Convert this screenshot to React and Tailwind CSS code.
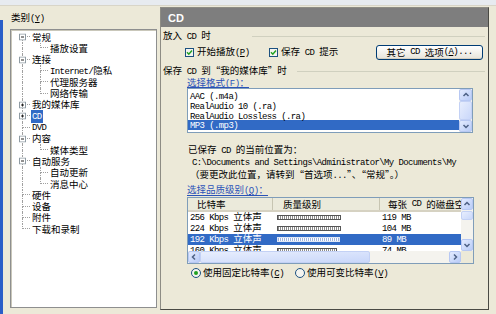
// App.jsx — WMP "选项" dialog, CD page
import React from 'react'

// Latin runs are half-width (SimSun-like), CJK runs use the CJK family
const MONO = "font-['Liberation_Mono',monospace] text-[9px] tracking-[-0.6px]"
const LINE = 'border-dotted border-[#a0a0a0]'

// splits a string into ASCII / CJK runs; "&X" underlines X (accelerator)
function Txt({ s }) {
  const out = []
  let k = 0
  s.split(/([\x20-\x7e]+)/).filter(Boolean).forEach(p => {
    if (/^[\x20-\x7e]+$/.test(p)) {
      const i = p.indexOf('&')
      if (i >= 0) {
        out.push(
          <span key={k++} className={MONO}>
            {p.slice(0, i)}<u>{p[i + 1]}</u>{p.slice(i + 2)}
          </span>
        )
      } else {
        out.push(<span key={k++} className={MONO}>{p}</span>)
      }
    } else {
      out.push(<span key={k++}>{p}</span>)
    }
  })
  return out
}

// ── Tree ─────────────────────────────────────────────────────────────
const TREE = [
  { t: '常规', g: ['first'], box: 'minus' },
  { t: '播放设置', g: ['bar', 'ell'] },
  { t: '连接', g: ['tee'], box: 'minus' },
  { t: 'Internet/隐私', g: ['bar', 'tee'] },
  { t: '代理服务器', g: ['bar', 'tee'] },
  { t: '网络传输', g: ['bar', 'ell'] },
  { t: '我的媒体库', g: ['tee'], box: 'plus' },
  { t: 'CD', g: ['tee'], box: 'plus', sel: true },
  { t: 'DVD', g: ['tee'] },
  { t: '内容', g: ['tee'], box: 'minus' },
  { t: '媒体类型', g: ['bar', 'ell'] },
  { t: '自动服务', g: ['tee'], box: 'minus' },
  { t: '自动更新', g: ['bar', 'tee'] },
  { t: '消息中心', g: ['bar', 'ell'] },
  { t: '硬件', g: ['tee'] },
  { t: '设备', g: ['tee'] },
  { t: '附件', g: ['tee'] },
  { t: '下载和录制', g: ['ell'] },
]

function Expander({ plus }) {
  return (
    <svg width="7" height="7" viewBox="0 0 7 7" className="absolute left-[7px] top-1/2 -translate-y-1/2">
      <rect x="0.5" y="0.5" width="6" height="6" fill="#fff" stroke="#8f9ba3" />
      <path d="M2 3.5H5" stroke="#222" />
      {plus && <path d="M3.5 2V5" stroke="#222" />}
    </svg>
  )
}

function Gutter({ type, box }) {
  const top = type === 'tee' || type === 'ell' || type === 'bar'
  const bottom = type === 'tee' || type === 'first' || type === 'bar'
  const arm = type !== 'bar'
  return (
    <div className="relative w-[18px] flex shrink-0">
      <div className="w-[10px]" />
      <div className="flex-1 flex flex-col">
        <div className={`h-1/2 ${LINE} ${top ? 'border-l' : ''} ${arm ? 'border-b' : ''}`} />
        <div className={`h-1/2 ${LINE} ${bottom ? 'border-l' : ''}`} />
      </div>
      {box && <Expander plus={box === 'plus'} />}
    </div>
  )
}

// ── Small XP controls ───────────────────────────────────────────────
function Check() {
  return (
    <svg width="9" height="9" viewBox="0 0 9 9" className="shrink-0">
      <rect x="0.5" y="0.5" width="8" height="8" fill="#f4f4f0" stroke="#1c5180" />
      <path d="M2 4.3L3.8 6.2L7 2.6" fill="none" stroke="#21a121" strokeWidth="1.5" />
    </svg>
  )
}

function Radio({ on }) {
  return (
    <svg width="10" height="10" viewBox="0 0 10 10" className="shrink-0">
      <circle cx="5" cy="5" r="4.5" fill="#f4f4f0" stroke="#1c5180" />
      {on && <circle cx="5" cy="5" r="2" fill="#21a121" />}
    </svg>
  )
}

const ARROW = {
  up: 'M1.5 5L4 2.5L6.5 5',
  down: 'M1.5 3L4 5.5L6.5 3',
  left: 'M5 1.5L2.5 4L5 6.5',
  right: 'M3 1.5L5.5 4L3 6.5',
}

function SBtn({ dir, className = '' }) {
  return (
    <div className={`flex items-center justify-center shrink-0 rounded-[2px] border border-[#b7c8f3] bg-linear-to-br from-[#e3ebfe] to-[#b9ccf7] ${className}`}>
      <svg width="8" height="8" viewBox="0 0 8 8">
        <path d={ARROW[dir]} fill="none" stroke="#4d6185" strokeWidth="1.5" />
      </svg>
    </div>
  )
}

const THUMB = 'rounded-[2px] border border-[#c3d1f5] bg-linear-to-br from-[#e8eefd] to-[#c9d7fa]'

// ── Data ───────────────────────────────────────────────────────────
const FORMATS = ['AAC (.m4a)', 'RealAudio 10 (.ra)', 'RealAudio Lossless (.ra)', 'MP3 (.mp3)']

const RATES = [
  { rate: '256 Kbps 立体声', bar: 64, size: '119 MB' },
  { rate: '224 Kbps 立体声', bar: 64, size: '104 MB' },
  { rate: '192 Kbps 立体声', bar: 63, size: '89 MB', sel: true },
  { rate: '160 Kbps 立体声', bar: 60, size: '74 MB' },
]

export default function App() {
  return (
    <div
      lang="zh-CN"
      className="w-[496px] h-[314px] overflow-hidden flex flex-col bg-[#ece9d8] text-black font-['Noto_Sans_CJK_SC','Noto_Sans',sans-serif] text-[9.5px] leading-[12px]"
    >
      {/* top strip */}
      <div className="h-[6px] shrink-0 bg-[#e7ebf0] border-b border-[#d8d5c8]" />

      <div className="flex flex-1">
        {/* window frame */}
        <div className="w-[3px] mt-[14px] bg-[#2a5ec8]" />

        {/* ── Category tree ───────────────────────────────── */}
        <div className="ml-[7px] w-[147px] flex flex-col">
          <div className="mt-[5px] h-[12px] pl-[1px] whitespace-pre">
            <Txt s="类别(&Y)" />
          </div>
          <div className="mt-[6px] h-[279px] bg-white border border-[#8e8f8f] shadow-[inset_1px_1px_0_#c9c7ba] pl-[1px] pt-[1.5px]">
            {TREE.map(row => (
              <div key={row.t} className="flex h-[11.3px] leading-[11px] whitespace-pre">
                {row.g.map((g, i) => (
                  <Gutter key={i} type={g} box={i === row.g.length - 1 ? row.box : undefined} />
                ))}
                <span className={`self-center ml-[1px] px-[1px] leading-[11px] ${row.sel ? 'bg-[#316ac5] text-white' : ''}`}>
                  <Txt s={row.t} />
                </span>
              </div>
            ))}
          </div>
        </div>

        {/* ── CD page ─────────────────────────────────────── */}
        <div className="ml-[3px] mt-[1px] w-[329px] h-[303px] flex flex-col border border-[#8d8c84] border-r-[#4a4a44] border-b-[#4a4a44]">
          <div className="h-[19px] shrink-0 flex items-center pl-[7px] bg-[#7e7e7e] text-white font-['Liberation_Sans',sans-serif] font-bold text-[11px]">
            CD
          </div>

          <div className="flex-1 flex flex-col pl-[2px] pr-[3px] whitespace-pre">
            {/* 放入 CD 时 */}
            <div className="mt-[3px] h-[12px] flex items-center">
              <div className="w-[89px]"><Txt s="放入 CD 时" /></div>
              <div className="flex-1 border-t border-[#d0d0bf]" />
            </div>

            <div className="mt-[2px] h-[16px] flex items-center">
              <div className="ml-[22px]"><Check /></div>
              <div className="ml-[3px] w-[72px]"><Txt s="开始播放(&P)" /></div>
              <Check />
              <div className="ml-[3px]"><Txt s="保存 CD 提示" /></div>
              <button className="ml-auto mr-[2px] w-[107px] h-[15px] flex items-center justify-center rounded-[3px] border border-[#003c74] bg-linear-to-b from-white to-[#e6e4da] shadow-[inset_0_-1px_0_#d4cfc2]">
                <Txt s="其它 CD 选项(&A)..." />
              </button>
            </div>

            {/* 保存 CD 到“我的媒体库”时 */}
            <div className="mt-[5px] h-[12px] flex items-center">
              <div className="w-[134px]"><Txt s="保存 CD 到“我的媒体库”时" /></div>
              <div className="flex-1 border-t border-[#d0d0bf]" />
            </div>

            <div className="ml-[24px] h-[11px] flex">
              <span className="leading-[10px] border-b border-[#2a52b8] text-[#2a52b8]">
                <Txt s="选择格式(&F)：" />
              </span>
            </div>

            {/* format listbox */}
            <div className="ml-[24px] w-[286px] h-[45px] shrink-0 flex bg-white border border-[#7f9db9]">
              <div className="flex-1 pt-[2px]">
                {FORMATS.map(f => (
                  <div
                    key={f}
                    className={`h-[9.8px] leading-[9.8px] pl-[2px] ${f.startsWith('MP3') ? 'bg-[#316ac5] text-white' : ''}`}
                  >
                    <Txt s={f} />
                  </div>
                ))}
              </div>
              <div className="w-[13px] flex flex-col bg-[#f4f3ee]">
                <SBtn dir="up" className="h-[12px]" />
                <div className={`flex-1 ${THUMB}`} />
                <SBtn dir="down" className="h-[12px]" />
              </div>
            </div>

            {/* current location */}
            <div className="mt-[10px] h-[12px] ml-[25px]"><Txt s="已保存 CD 的当前位置为：" /></div>
            <div className="h-[13px] leading-[13px] ml-[29px]">
              <Txt s={'C:\\Documents and Settings\\Administrator\\My Documents\\My'} />
            </div>
            <div className="h-[12px] ml-[27px]"><Txt s="（要更改此位置，请转到“首选项...”、“常规”。）" /></div>

            <div className="mt-[3px] ml-[24px] h-[13px] flex">
              <span className="leading-[12px] border-b border-[#2a52b8] text-[#2a52b8]">
                <Txt s="选择品质级别(&Q)：" />
              </span>
            </div>

            {/* bitrate list view */}
            <div className="mt-[1px] ml-[24px] w-[287px] h-[67px] shrink-0 flex flex-col bg-white border border-[#7f9db9]">
              <div className="h-[53px] flex">
                <div className="flex-1 overflow-hidden leading-[11px]">
                  <div className="h-[14px] flex items-center bg-[#ebeadb] border-b-2 border-[#d6d2c2]">
                    <div className="w-[85px] h-full flex items-center pl-[9px] border-r border-[#c7c5b2]"><Txt s="比特率" /></div>
                    <div className="w-[107px] h-full flex items-center pl-[10px] border-r border-[#c7c5b2]"><Txt s="质量级别" /></div>
                    <div className="flex-1 h-full flex items-center pl-[8px] overflow-hidden"><Txt s="每张 CD 的磁盘空间" /></div>
                  </div>
                  {RATES.map(r => (
                    <div key={r.rate} className={`h-[11px] flex items-center ${r.sel ? 'bg-[#316ac5] text-white' : ''}`}>
                      <div className="w-[85px] pl-[2px]"><Txt s={r.rate} /></div>
                      <div className="w-[107px] pl-[4px]">
                        <div
                          className={`h-[5px] border ${r.sel ? 'border-[#dfe6f5] bg-[repeating-linear-gradient(90deg,#9fb4e0_0_1px,#ffffff_1px_2px)]' : 'border-[#555] bg-[repeating-linear-gradient(90deg,#8a8a8a_0_1px,#ffffff_1px_2px)]'}`}
                          style={{ width: r.bar }}
                        />
                      </div>
                      <div className="flex-1 pl-[2px]"><Txt s={r.size} /></div>
                    </div>
                  ))}
                </div>
                <div className="w-[12px] flex flex-col bg-[#f4f3ee]">
                  <SBtn dir="up" className="h-[12px]" />
                  <div className={`h-[9px] mt-[1px] ${THUMB}`} />
                  <div className="flex-1" />
                  <SBtn dir="down" className="h-[12px]" />
                </div>
              </div>
              <div className="h-[12px] flex bg-[#f4f3ee]">
                <SBtn dir="left" className="w-[12px]" />
                <div className={`w-[170px] ${THUMB}`} />
                <div className="flex-1" />
                <SBtn dir="right" className="w-[12px]" />
                <div className="w-[12px] bg-[#ece9d8]" />
              </div>
            </div>

            {/* encoding mode */}
            <div className="mt-[3px] h-[12px] flex items-center">
              <div className="ml-[28px]"><Radio on /></div>
              <div className="ml-[2px] w-[92px]"><Txt s="使用固定比特率(&C)" /></div>
              <Radio />
              <div className="ml-[2px]"><Txt s="使用可变比特率(&V)" /></div>
            </div>
          </div>
        </div>
      </div>
    </div>
  )
}
